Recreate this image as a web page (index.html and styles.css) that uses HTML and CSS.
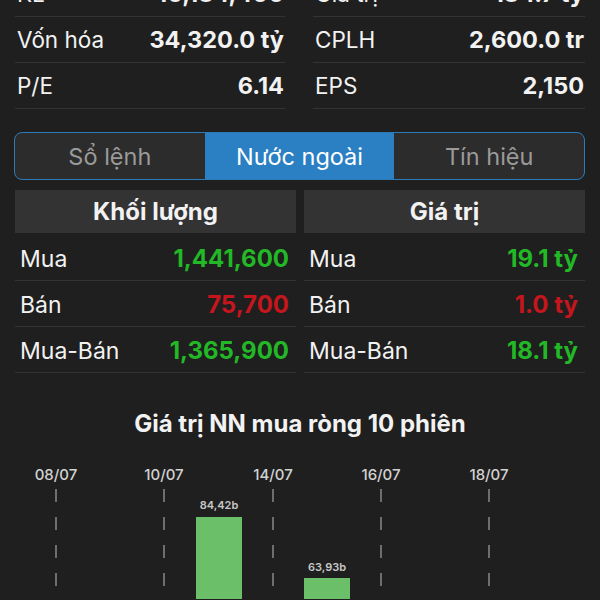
FILE: index.html
```html
<!DOCTYPE html>
<html lang="vi">

<head>
    <meta charset="UTF-8">
    <meta name="viewport" content="width=device-width, initial-scale=1.0">
    <title>Nước ngoài</title>
    <link rel="stylesheet" href="styles.css">
</head>

<body>
    <div class="screen">
        <!-- Stock summary -->
        <div class="stats">
            <div class="stat-col">
                <div class="stat-row"><span>KL</span><b>10,184,400</b></div>
                <div class="stat-row"><span>Vốn hóa</span><b>34,320.0 tỷ</b></div>
                <div class="stat-row"><span>P/E</span><b>6.14</b></div>
            </div>
            <div class="stat-col">
                <div class="stat-row"><span>Giá trị</span><b>184.7 tỷ</b></div>
                <div class="stat-row"><span>CPLH</span><b>2,600.0 tr</b></div>
                <div class="stat-row"><span>EPS</span><b>2,150</b></div>
            </div>
        </div>

        <!-- Tabs -->
        <div class="tabs">
            <div class="tab">Sổ lệnh</div>
            <div class="tab active">Nước ngoài</div>
            <div class="tab">Tín hiệu</div>
        </div>

        <!-- Foreign trading -->
        <div class="foreign">
            <div class="ftable">
                <div class="fhead">Khối lượng</div>
                <div class="frow"><span>Mua</span><b class="up">1,441,600</b></div>
                <div class="frow"><span>Bán</span><b class="down">75,700</b></div>
                <div class="frow"><span>Mua-Bán</span><b class="up">1,365,900</b></div>
            </div>
            <div class="ftable">
                <div class="fhead">Giá trị</div>
                <div class="frow"><span>Mua</span><b class="up">19.1 tỷ</b></div>
                <div class="frow"><span>Bán</span><b class="down">1.0 tỷ</b></div>
                <div class="frow"><span>Mua-Bán</span><b class="up">18.1 tỷ</b></div>
            </div>
        </div>

        <h2 class="chart-title">Giá trị NN mua ròng 10 phiên</h2>

        <svg class="chart" width="600" height="160" viewBox="0 0 600 160">
            <g class="grid">
                <line x1="56" y1="50" x2="56" y2="160" />
                <line x1="164" y1="50" x2="164" y2="160" />
                <line x1="273" y1="50" x2="273" y2="160" />
                <line x1="381" y1="50" x2="381" y2="160" />
                <line x1="489" y1="50" x2="489" y2="160" />
            </g>
            <g class="dates">
                <text x="56" y="41">08/07</text>
                <text x="164" y="41">10/07</text>
                <text x="273" y="41">14/07</text>
                <text x="381" y="41">16/07</text>
                <text x="489" y="41">18/07</text>
            </g>
            <rect class="bar" x="196" y="78" width="46" height="82" />
            <rect class="bar" x="304" y="139" width="46" height="21" />
            <text class="bar-label" x="219" y="70">84,42b</text>
            <text class="bar-label" x="327" y="132">63,93b</text>
        </svg>
    </div>
</body>

</html>
```

FILE: styles.css
```css
* {
    margin: 0;
    padding: 0;
    box-sizing: border-box;
    font-family: Inter, "Noto Sans", sans-serif;
}

body {
    background-color: #1f1f1f;
    color: #f2f2f2;
    height: 600px;
    overflow: hidden;
}

.screen {
    width: 600px;
    margin-top: -29px;
}

.stats {
    display: grid;
    grid-template-columns: 270px 272px;
    gap: 28px;
    padding: 0 15px;
}

.stat-row {
    display: flex;
    justify-content: space-between;
    align-items: center;
    height: 46px;
    border-bottom: 1px solid #333;
    font-size: 22.5px;
    padding: 0 1px 0 2px;
}

.stat-row b {
    font-weight: 700;
    font-size: 23.5px;
}

.tabs {
    display: flex;
    margin: 23px 15px 0 14px;
    height: 48px;
    border: 1.5px solid #2b7bb9;
    border-radius: 8px;
    overflow: hidden;
    background-color: #2c2c2c;
}

.tab {
    flex: 1;
    display: flex;
    align-items: center;
    justify-content: center;
    font-size: 23.5px;
    color: #9a9a9a;
}

.tab.active {
    background-color: #2a80c3;
    color: #fff;
}

.foreign {
    display: grid;
    grid-template-columns: 281px 281px;
    gap: 8px;
    padding: 0 15px;
    margin-top: 10px;
}

.fhead {
    height: 43px;
    margin-bottom: 2px;
    background-color: #333;
    display: flex;
    align-items: center;
    justify-content: center;
    font-size: 24px;
    font-weight: 700;
}

.frow {
    display: flex;
    justify-content: space-between;
    align-items: center;
    height: 46px;
    padding: 2px 7px 0 5px;
    border-bottom: 1px solid #333;
    font-size: 23px;
}

.frow b {
    font-size: 24px;
    font-weight: 700;
}

.up {
    color: #22b826;
}

.down {
    color: #c4161c;
}

.chart-title {
    margin-top: 36px;
    height: 30px;
    line-height: 30px;
    text-align: center;
    font-size: 24px;
    font-weight: 700;
}

.chart {
    display: block;
}

.grid line {
    stroke: #6e6e6e;
    stroke-width: 2;
    stroke-dasharray: 13 15;
}

.dates text {
    fill: #d2d2d2;
    font-size: 15px;
    font-weight: 500;
    text-anchor: middle;
}

.bar {
    fill: #6cbf69;
}

.bar-label {
    fill: #c8c8c8;
    font-size: 11px;
    font-weight: 600;
    text-anchor: middle;
}
```
